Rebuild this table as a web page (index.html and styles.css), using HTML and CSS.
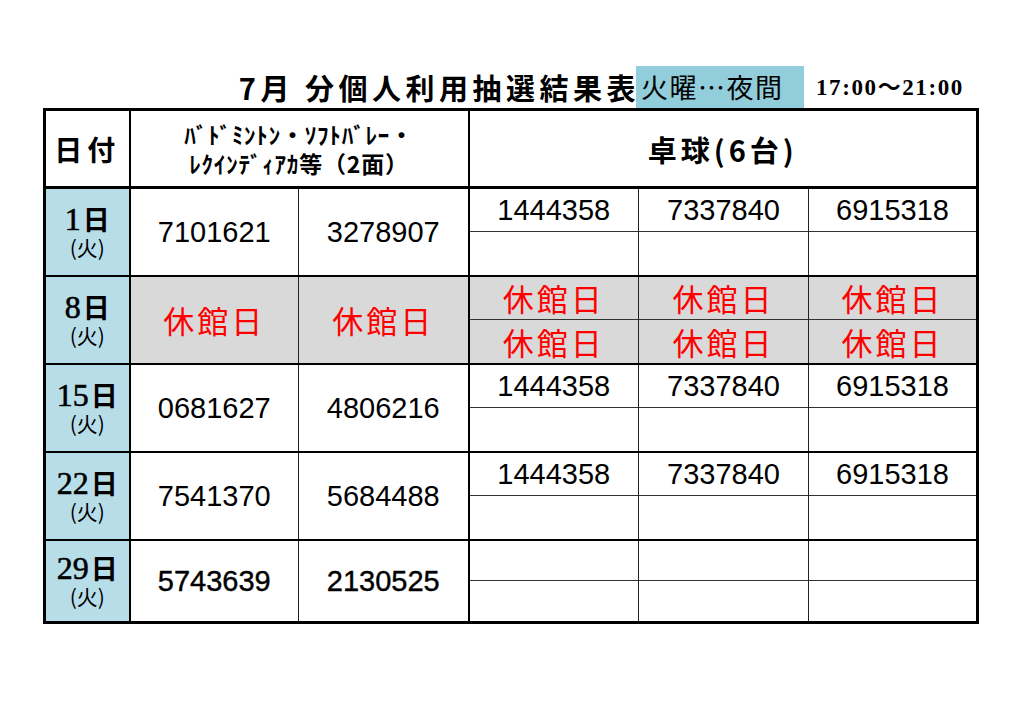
FILE: index.html
```html
<!DOCTYPE html>
<html lang="ja">
<head>
<meta charset="utf-8">
<title>7月 分個人利用抽選結果表</title>
<link rel="stylesheet" href="styles.css">
</head>
<body>
<div class="sheet">
  <div class="title-row">
    <div class="title">7月 分個人利用抽選結果表</div>
    <div class="slot">火曜…夜間</div>
    <div class="time">17:00～21:00</div>
  </div>
  <table class="grid">
    <colgroup>
      <col class="c-date"><col class="c-n1"><col class="c-n2"><col class="c-n2"><col class="c-n2"><col class="c-n1">
    </colgroup>
    <thead>
      <tr class="head">
        <th class="h-date">日付</th>
        <th colspan="2" class="h-bad">ﾊﾞﾄﾞﾐﾝﾄﾝ・ｿﾌﾄﾊﾞﾚｰ・<br>ﾚｸｲﾝﾃﾞｨｱｶ等（2面）</th>
        <th colspan="3" class="h-tt">卓球(6台)</th>
      </tr>
    </thead>
    <tbody>
      <tr class="top">
        <td rowspan="2" class="date"><div class="d"><span class="dn">1</span>日</div><div class="w">(火)</div></td>
        <td rowspan="2" class="num sep">7101621</td>
        <td rowspan="2" class="num">3278907</td>
        <td class="tt sep">1444358</td><td class="tt">7337840</td><td class="tt">6915318</td>
      </tr>
      <tr class="bot"><td class="tt sep"></td><td class="tt"></td><td class="tt"></td></tr>

      <tr class="top closed">
        <td rowspan="2" class="date"><div class="d"><span class="dn">8</span>日</div><div class="w">(火)</div></td>
        <td rowspan="2" class="num sep red">休館日</td>
        <td rowspan="2" class="num red">休館日</td>
        <td class="tt sep red">休館日</td><td class="tt red">休館日</td><td class="tt red">休館日</td>
      </tr>
      <tr class="bot closed"><td class="tt sep red">休館日</td><td class="tt red">休館日</td><td class="tt red">休館日</td></tr>

      <tr class="top">
        <td rowspan="2" class="date"><div class="d"><span class="dn">15</span>日</div><div class="w">(火)</div></td>
        <td rowspan="2" class="num sep">0681627</td>
        <td rowspan="2" class="num">4806216</td>
        <td class="tt sep">1444358</td><td class="tt">7337840</td><td class="tt">6915318</td>
      </tr>
      <tr class="bot"><td class="tt sep"></td><td class="tt"></td><td class="tt"></td></tr>

      <tr class="top">
        <td rowspan="2" class="date"><div class="d"><span class="dn">22</span>日</div><div class="w">(火)</div></td>
        <td rowspan="2" class="num sep">7541370</td>
        <td rowspan="2" class="num">5684488</td>
        <td class="tt sep">1444358</td><td class="tt">7337840</td><td class="tt">6915318</td>
      </tr>
      <tr class="bot"><td class="tt sep"></td><td class="tt"></td><td class="tt"></td></tr>

      <tr class="top last">
        <td rowspan="2" class="date"><div class="d"><span class="dn">29</span>日</div><div class="w">(火)</div></td>
        <td rowspan="2" class="num sep strong">5743639</td>
        <td rowspan="2" class="num strong">2130525</td>
        <td class="tt sep"></td><td class="tt"></td><td class="tt"></td>
      </tr>
      <tr class="bot last"><td class="tt sep"></td><td class="tt"></td><td class="tt"></td></tr>
    </tbody>
  </table>
</div>
</body>
</html>
```
FILE: styles.css
```css
html, body {
  margin: 0;
  padding: 0;
  background: #ffffff;
}

body {
  font-family: "Noto Sans CJK JP", "Liberation Sans", sans-serif;
  color: #000;
}

.sheet {
  padding: 66px 0 0 43px;
  width: 940px;
}

.title-row {
  display: flex;
  align-items: stretch;
  height: 42px;
}

.title {
  width: 597px;
  text-align: right;
  font-size: 29px;
  font-weight: 700;
  letter-spacing: 4.5px;
  line-height: 42px;
  white-space: nowrap;
  margin-right: -4px;
}

.slot {
  width: 168px;
  background: #92cddc;
  font-size: 27px;
  letter-spacing: 1.5px;
  line-height: 42px;
  padding-left: 5px;
  box-sizing: border-box;
  white-space: nowrap;
  overflow: hidden;
}

.time {
  margin-left: 12px;
  font-family: "Liberation Serif", "Noto Sans CJK JP", serif;
  font-weight: 700;
  font-size: 23px;
  letter-spacing: 1.6px;
  line-height: 44px;
  white-space: nowrap;
}

.grid {
  border-collapse: collapse;
  table-layout: fixed;
  width: 933px;
  border: 3px solid #000;
}

.c-date { width: 85px; }
.c-n1 { width: 169px; }
.c-n2 { width: 170px; }

.grid th,
.grid td {
  padding: 0;
  text-align: center;
  vertical-align: middle;
  border-left: 1px solid #222;
  white-space: nowrap;
  overflow: hidden;
}

.grid th.h-bad,
.grid th.h-tt,
.grid td.sep {
  border-left: 2px solid #000;
}

.grid .head {
  height: 78px;
}

.grid th {
  border-bottom: 3px solid #000;
}

.h-date {
  font-size: 28px;
  font-weight: 700;
  letter-spacing: 5px;
  padding-left: 5px;
}

.h-bad {
  font-size: 23px;
  font-weight: 700;
  line-height: 29px;
  letter-spacing: 0.8px;
}

.h-tt {
  font-size: 29px;
  font-weight: 700;
  letter-spacing: 4px;
  padding-left: 4px;
}

.grid tr.top td {
  border-top: 2px solid #000;
  height: 42px;
}

.grid tr.bot td {
  border-top: 1px solid #333;
  height: 43px;
}

.grid tr.last td { height: 39px; }
.grid tr.bot.last td { height: 40px; }

.grid td.date {
  background: #b7dde8;
  border-left: none;
}

.d {
  font-size: 27px;
  font-weight: 700;
  line-height: 30px;
}

.dn {
  font-family: "Liberation Serif", serif;
  font-size: 32px;
  font-weight: 400;
  -webkit-text-stroke: 0.6px #000;
  margin-right: 2px;
}

.w {
  font-size: 21px;
  line-height: 27px;
  font-weight: 400;
}

.num,
.tt {
  font-family: "Liberation Sans", "Noto Sans CJK JP", sans-serif;
  font-size: 29px;
}

.strong {
  -webkit-text-stroke: 0.4px #000;
}

.closed td {
  background: #d9d9d9;
}

.closed td.date {
  background: #b7dde8;
}

.red {
  color: #ff0000;
  font-family: "Noto Sans CJK JP", sans-serif;
  font-size: 31px;
  letter-spacing: 3px;
  padding-left: 3px;
  line-height: 40px;
}
```
